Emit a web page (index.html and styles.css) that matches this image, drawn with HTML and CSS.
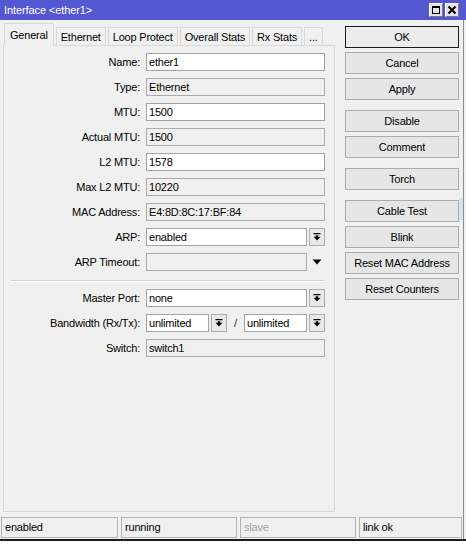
FILE: index.html
```html
<!DOCTYPE html>
<html>
<head>
<meta charset="utf-8">
<link rel="stylesheet" href="styles.css">
</head>
<body>
<div class="window">
  <div class="titlebar">
    <span class="title">Interface &lt;ether1&gt;</span>
    <div class="tb-btns">
      <span class="tb-btn"><svg width="10" height="10" viewBox="0 0 10 10"><path d="M1 1h8v8H1z M2 3v5h6V3z" fill="#000" fill-rule="evenodd"/></svg></span>
      <span class="tb-btn"><svg width="10" height="10" viewBox="0 0 10 10"><path d="M1.5 1.5L8.5 8.5M8.5 1.5L1.5 8.5" stroke="#000" stroke-width="2"/></svg></span>
    </div>
  </div>
  <div class="frame">
    <div class="main">
      <div class="left">
        <div class="tabs">
          <div class="tab active">General</div>
          <div class="tab">Ethernet</div>
          <div class="tab">Loop Protect</div>
          <div class="tab">Overall Stats</div>
          <div class="tab">Rx Stats</div>
          <div class="tab">...</div>
        </div>
        <div class="panel">
          <div class="row"><div class="label">Name:</div><div class="field">ether1</div></div>
          <div class="row"><div class="label">Type:</div><div class="field ro">Ethernet</div></div>
          <div class="row"><div class="label">MTU:</div><div class="field">1500</div></div>
          <div class="row"><div class="label">Actual MTU:</div><div class="field ro">1500</div></div>
          <div class="row"><div class="label">L2 MTU:</div><div class="field">1578</div></div>
          <div class="row"><div class="label">Max L2 MTU:</div><div class="field ro">10220</div></div>
          <div class="row"><div class="label">MAC Address:</div><div class="field ro">E4:8D:8C:17:BF:84</div></div>
          <div class="row"><div class="label">ARP:</div>
            <div class="combo"><div class="field">enabled</div><div class="ddbtn"><svg width="8" height="8" viewBox="0 0 8 8"><path d="M0.5 0h7v1.3h-7z M2.8 2.3h2.4v1.5h2.3L4 7.6 0.5 3.8h2.3z" fill="#000"/></svg></div></div>
          </div>
          <div class="row"><div class="label">ARP Timeout:</div>
            <div class="combo"><div class="field ro"></div><div class="ddarrow"><svg width="10" height="6" viewBox="0 0 10 6"><path d="M0.5 0.5h9L5 5.5z" fill="#000"/></svg></div></div>
          </div>
          <div class="sep"></div>
          <div class="row"><div class="label">Master Port:</div>
            <div class="combo"><div class="field">none</div><div class="ddbtn"><svg width="8" height="8" viewBox="0 0 8 8"><path d="M0.5 0h7v1.3h-7z M2.8 2.3h2.4v1.5h2.3L4 7.6 0.5 3.8h2.3z" fill="#000"/></svg></div></div>
          </div>
          <div class="row"><div class="label">Bandwidth (Rx/Tx):</div>
            <div class="combo">
              <div class="field bw1">unlimited</div><div class="ddbtn"><svg width="8" height="8" viewBox="0 0 8 8"><path d="M0.5 0h7v1.3h-7z M2.8 2.3h2.4v1.5h2.3L4 7.6 0.5 3.8h2.3z" fill="#000"/></svg></div>
              <div class="slash">/</div>
              <div class="field bw2">unlimited</div><div class="ddbtn"><svg width="8" height="8" viewBox="0 0 8 8"><path d="M0.5 0h7v1.3h-7z M2.8 2.3h2.4v1.5h2.3L4 7.6 0.5 3.8h2.3z" fill="#000"/></svg></div>
            </div>
          </div>
          <div class="row"><div class="label">Switch:</div><div class="field ro">switch1</div></div>
        </div>
      </div>
      <div class="buttons">
        <div class="btn default">OK</div>
        <div class="btn">Cancel</div>
        <div class="btn">Apply</div>
        <div class="btn gap">Disable</div>
        <div class="btn">Comment</div>
        <div class="btn gap">Torch</div>
        <div class="btn gap">Cable Test</div>
        <div class="btn">Blink</div>
        <div class="btn">Reset MAC Address</div>
        <div class="btn">Reset Counters</div>
      </div>
    </div>
    <div class="status">
      <div class="seg s1">enabled</div>
      <div class="seg s2">running</div>
      <div class="seg s3 dim">slave</div>
      <div class="seg s4">link ok</div>
    </div>
  </div>
</div>
<div class="hover-hint"></div>
</body>
</html>
```
FILE: styles.css
```css
* { box-sizing: border-box; }
html, body { margin: 0; padding: 0; }
body {
  position: relative;
  width: 466px;
  height: 546px;
  background: #fff;
  font-family: "Liberation Sans", Arial, sans-serif;
  font-size: 11px;
  letter-spacing: -0.2px;
  color: #000;
  overflow: hidden;
}
.window {
  width: 466px;
  height: 541px;
  background: #f0f0f0;
  border-bottom: 2px solid #1c1c1c;
  display: flex;
  flex-direction: column;
}
.titlebar {
  height: 20px;
  flex: none;
  background: #5357d2;
  color: #fff;
  display: flex;
  align-items: center;
  justify-content: space-between;
  padding: 0 7px 0 4px;
  letter-spacing: -0.1px;
}
.tb-btns { display: flex; gap: 2px; }
.tb-btn {
  width: 14px;
  height: 14px;
  background: #e3e3e3;
  border: 1px solid;
  border-color: #fafafa #7c7c7c #7c7c7c #fafafa;
  display: flex;
  align-items: center;
  justify-content: center;
}
.frame {
  width: 464px;
  flex: 1;
  border-right: 1px solid #8c8c8c;
  display: flex;
  flex-direction: column;
}
.main { display: flex; height: 492px; flex: none; }
.left { margin-left: 3px; width: 332px; display: flex; flex-direction: column; }
.tabs { height: 25px; display: flex; align-items: flex-end; padding-left: 1px; }
.tab {
  height: 18px;
  padding: 0 4px;
  border: 1px solid #d9d9d9;
  border-bottom: none;
  margin-right: 2px;
  display: flex;
  align-items: center;
  background: #f0f0f0;
  white-space: nowrap;
}
.tab.active {
  height: 23px;
  margin-bottom: -1px;
  position: relative;
  z-index: 1;
  padding: 0 5px;
}
.panel {
  height: 467px;
  border: 1px solid #d9d9d9;
  padding-top: 7px;
  display: flex;
  flex-direction: column;
}
.row { display: flex; align-items: center; height: 18px; margin-bottom: 7px; flex: none; }
.label { width: 136px; margin-right: 6px; text-align: right; white-space: nowrap; }
.field {
  width: 179px;
  height: 18px;
  border: 1px solid #a3a3a3;
  background: #fff;
  padding-left: 2px;
  line-height: 16px;
  white-space: nowrap;
  overflow: hidden;
}
.field.ro { background: #f0f0f0; border-color: #ababab; }
.combo { display: flex; align-items: center; width: 179px; gap: 2px; }
.combo .field { flex: 1; width: auto; }
.combo .field.bw1 { flex: none; width: 63px; }
.combo .field.bw2 { flex: none; width: 63px; }
.ddbtn {
  width: 16px;
  height: 18px;
  flex: none;
  border: 1px solid #adadad;
  background: #e9e9e9;
  display: flex;
  align-items: center;
  justify-content: center;
}
.ddarrow { width: 16px; height: 18px; display: flex; align-items: center; justify-content: center; }
.slash { width: 13px; text-align: center; color: #333; }
.sep {
  flex: none;
  margin: 2px 9px 7px 6px;
  height: 2px;
  border-top: 1px solid #d4d4d4;
  border-bottom: 1px solid #fff;
}
.buttons {
  margin-left: 10px;
  padding-top: 6px;
  width: 114px;
  display: flex;
  flex-direction: column;
}
.btn {
  height: 22px;
  margin-bottom: 4px;
  border: 1px solid #acacac;
  background: #e6e6e6;
  display: flex;
  align-items: center;
  justify-content: center;
  white-space: nowrap;
}
.btn.gap { margin-top: 6px; }
.btn.default { border-color: #1a1a1a; background: #ececec; }
.status {
  display: flex;
  gap: 3px;
  height: 21px;
  margin-top: 5px;
  padding: 0 1px;
}
.seg {
  border: 1px solid #b4b4b4;
  padding-left: 3px;
  line-height: 19px;
  white-space: nowrap;
}
.s1 { width: 117px; }
.s2 { width: 116px; }
.s3 { width: 116px; }
.s4 { flex: 1; }
.dim { color: #a3a3a3; }
.hover-hint {
  position: absolute;
  left: 459px;
  top: 198px;
  width: 4px;
  height: 22px;
  background: #d6e4f4;
}
```
